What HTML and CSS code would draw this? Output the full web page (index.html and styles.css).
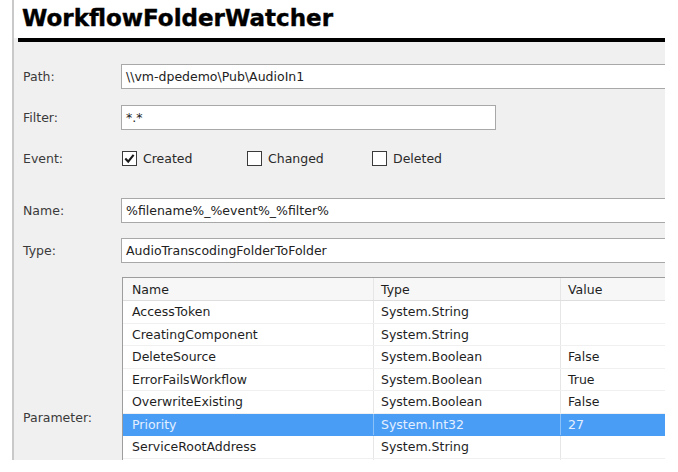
FILE: index.html
```html
<!DOCTYPE html>
<html>
<head>
<meta charset="utf-8">
<link rel="stylesheet" href="styles.css">
</head>
<body>
<div class="frame">
  <div class="panel">
    <header class="head">
      <h1 class="title">WorkflowFolderWatcher</h1>
    </header>
    <div class="rule"></div>
    <div class="form">
      <div class="row r-path">
        <span class="lbl">Path:</span>
        <div class="field wide">\\vm-dpedemo\Pub\AudioIn1</div>
      </div>
      <div class="row r-filter">
        <span class="lbl">Filter:</span>
        <div class="field short">*.*</div>
      </div>
      <div class="row r-event">
        <span class="lbl">Event:</span>
        <div class="checks">
          <div class="check"><span class="box"><svg viewBox="0 0 13 13" width="13" height="13"><path d="M2.3 6.6 L5.2 9.6 L10.6 2.8" fill="none" stroke="#1a1a1a" stroke-width="2.1"/></svg></span><span>Created</span></div>
          <div class="check"><span class="box"></span><span>Changed</span></div>
          <div class="check"><span class="box"></span><span>Deleted</span></div>
        </div>
      </div>
      <div class="row r-name">
        <span class="lbl">Name:</span>
        <div class="field wide">%filename%_%event%_%filter%</div>
      </div>
      <div class="row r-type">
        <span class="lbl">Type:</span>
        <div class="field wide">AudioTranscodingFolderToFolder</div>
      </div>
      <div class="row r-param">
        <span class="lbl">Parameter:</span>
        <div class="table">
          <div class="tr th"><div class="td">Name</div><div class="td">Type</div><div class="td">Value</div></div>
          <div class="tr"><div class="td">AccessToken</div><div class="td">System.String</div><div class="td"></div></div>
          <div class="tr"><div class="td">CreatingComponent</div><div class="td">System.String</div><div class="td"></div></div>
          <div class="tr"><div class="td">DeleteSource</div><div class="td">System.Boolean</div><div class="td">False</div></div>
          <div class="tr"><div class="td">ErrorFailsWorkflow</div><div class="td">System.Boolean</div><div class="td">True</div></div>
          <div class="tr"><div class="td">OverwriteExisting</div><div class="td">System.Boolean</div><div class="td">False</div></div>
          <div class="tr sel"><div class="td">Priority</div><div class="td">System.Int32</div><div class="td">27</div></div>
          <div class="tr"><div class="td">ServiceRootAddress</div><div class="td">System.String</div><div class="td"></div></div>
          <div class="tr"><div class="td"></div><div class="td"></div><div class="td"></div></div>
        </div>
      </div>
    </div>
  </div>
</div>
</body>
</html>
```

FILE: styles.css
```css
body {
  margin: 0;
  background: #ffffff;
  font-family: "DejaVu Sans", sans-serif;
}

.frame {
  padding-left: 12px;
  height: 460px;
}

.panel {
  width: 651px;
  height: 460px;
  border-left: 2px solid #c9c9c9;
  background: #f0f0f0;
  overflow: hidden;
}

.head {
  background: #ffffff;
  height: 38px;
  padding: 5px 0 0 8px;
  box-sizing: border-box;
}

.title {
  margin: 0;
  font: bold 23px/27px "DejaVu Sans", sans-serif;
  color: #000000;
  white-space: nowrap;
  -webkit-text-stroke: 0.4px #000000;
}

.rule {
  height: 4px;
  background: #000000;
  margin-left: 4px;
}

.form {
  padding-top: 22px;
  font-size: 12.5px;
  color: #333333;
}

.row {
  display: grid;
  grid-template-columns: 107px 1fr;
  align-items: center;
}

.lbl {
  padding-left: 9px;
  color: #3a3a3a;
}

.field {
  height: 25px;
  box-sizing: border-box;
  border: 1px solid #a8a8a8;
  background: #ffffff;
  padding: 0 4px;
  display: flex;
  align-items: center;
  white-space: nowrap;
  color: #222222;
}

.field.wide {
  width: 560px;
}

.field.short {
  width: 375px;
}

.r-filter {
  margin-top: 16px;
}

.r-event {
  margin-top: 16px;
  height: 24px;
}

.r-name {
  margin-top: 28px;
}

.r-type {
  margin-top: 15px;
}

.r-param {
  margin-top: 14px;
  align-items: start;
}

.r-param .lbl {
  padding-top: 133px;
}

.checks {
  display: flex;
  margin-left: 1px;
}

.check {
  display: flex;
  align-items: center;
  gap: 6px;
  width: 125px;
  color: #2a2a2a;
}

.box {
  width: 15px;
  height: 15px;
  box-sizing: border-box;
  border: 1px solid #3a3a3a;
  background: #ffffff;
  display: flex;
  align-items: center;
  justify-content: center;
}

.table {
  margin-left: 1px;
  width: 600px;
  border: 1px solid #9d9d9d;
  border-right: none;
  background: #ffffff;
  color: #1e1e1e;
}

.tr {
  display: grid;
  grid-template-columns: 251px 187px 1fr;
  height: 22.5px;
  box-sizing: border-box;
  border-bottom: 1px solid #f0f0f0;
}

.tr.th {
  height: 23px;
  background: #f7f7f7;
  border-bottom: 1px solid #dedede;
}

.td {
  display: flex;
  align-items: center;
  padding-left: 7px;
  border-right: 1px solid #e6e6e6;
  white-space: nowrap;
}

.td:first-child {
  padding-left: 9px;
}

.tr.sel {
  background: #4a9df5;
  color: #e4efff;
  border-bottom-color: #4a9df5;
}

.tr.sel .td {
  border-right-color: #8cc0f8;
}
```
